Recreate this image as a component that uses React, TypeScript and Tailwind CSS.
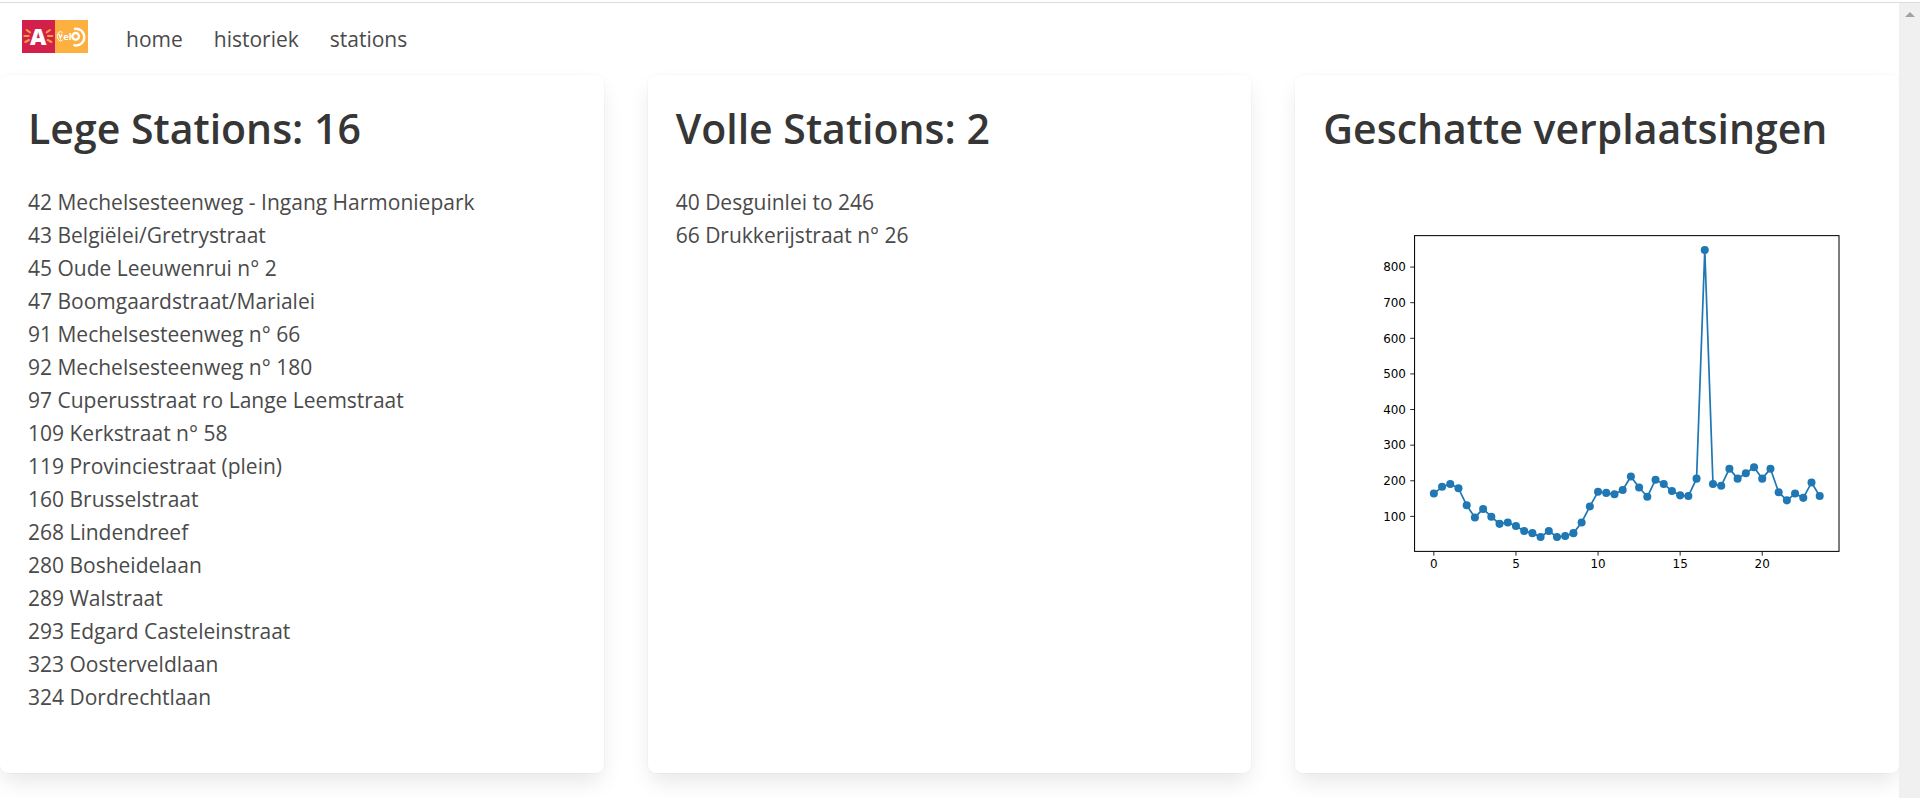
import type { ReactNode } from 'react';

const navItems = ['home', 'historiek', 'stations'];

const emptyStations = [
  '42 Mechelsesteenweg - Ingang Harmoniepark',
  '43 Belgiëlei/Gretrystraat',
  '45 Oude Leeuwenrui n° 2',
  '47 Boomgaardstraat/Marialei',
  '91 Mechelsesteenweg n° 66',
  '92 Mechelsesteenweg n° 180',
  '97 Cuperusstraat ro Lange Leemstraat',
  '109 Kerkstraat n° 58',
  '119 Provinciestraat (plein)',
  '160 Brusselstraat',
  '268 Lindendreef',
  '280 Bosheidelaan',
  '289 Walstraat',
  '293 Edgard Casteleinstraat',
  '323 Oosterveldlaan',
  '324 Dordrechtlaan',
];

const fullStations = ['40 Desguinlei to 246', '66 Drukkerijstraat n° 26'];

// One value per half hour, starting at midnight.
const trips = [
  164, 183, 191, 179, 131, 97, 121, 99, 79, 83, 73, 59, 53, 42, 59, 42, 45, 53, 83, 128, 169, 166, 162, 174,
  212, 181, 155, 203, 191, 171, 159, 157, 206, 848, 191, 186, 234, 206, 221, 238, 206, 234, 168, 145, 164, 152,
  195, 157,
];

const plot = { left: 80, top: 58, width: 496, height: 369 };
const xScale = (hour: number) => plot.left + ((hour + 1.175) / 25.85) * plot.width;
const yScale = (value: number) => plot.top + plot.height - ((value - 1.7) / 886.6) * plot.height;

function Logo() {
  return (
    <svg viewBox="0 0 198 99" className="h-[33px] w-[66px]" role="img" aria-label="Antwerpen Velo">
      <rect width="99" height="99" fill="#d3204a" />
      <rect x="99" width="99" height="99" fill="#fbb040" />
      <g stroke="#f9a13a" strokeWidth="6" strokeLinecap="round">
        <path d="M14 30 L24 37 M7 48 L20 48 M10 66 L21 60" />
        <path d="M84 30 L74 37 M91 48 L78 48 M88 66 L77 60" />
      </g>
      <text
        x="49"
        y="74"
        textAnchor="middle"
        fontSize="68"
        fontWeight="800"
        fontFamily="'Open Sans', sans-serif"
        fill="#fff"
      >
        A
      </text>
      <g fill="none" stroke="#fff">
        <path d="M122 38 A10 14 0 1 0 122 60" strokeWidth="3" />
        <path d="M111 42 L115 55 L120 42" strokeWidth="4" />
        <circle cx="161" cy="49" r="10" strokeWidth="7" />
        <path d="M156 27 A25 25 0 1 1 154 75" strokeWidth="7" />
      </g>
      <text x="124" y="59" fontSize="28" fontWeight="700" fontFamily="'Open Sans', sans-serif" fill="#fff">
        el
      </text>
    </svg>
  );
}

function TripsChart() {
  const points = trips.map((value, i) => ({ x: xScale(i / 2), y: yScale(value) }));
  return (
    <svg
      viewBox="-27 0 640 480"
      className="w-full"
      role="img"
      aria-label="Geschatte verplaatsingen per half uur"
      fontFamily="'DejaVu Sans', sans-serif"
      fontSize="14"
      fill="#000"
    >
      {[0, 5, 10, 15, 20].map((hour) => (
        <g key={hour}>
          <path d={`M${xScale(hour)} 427 v5`} stroke="#000" />
          <text x={xScale(hour)} y="447" textAnchor="middle">
            {hour}
          </text>
        </g>
      ))}
      {[100, 200, 300, 400, 500, 600, 700, 800].map((value) => (
        <g key={value}>
          <path d={`M80 ${yScale(value)} h-5`} stroke="#000" />
          <text x="70" y={yScale(value) + 5} textAnchor="end">
            {value}
          </text>
        </g>
      ))}
      <polyline
        points={points.map((p) => `${p.x},${p.y}`).join(' ')}
        fill="none"
        stroke="#1f77b4"
        strokeWidth="2"
        strokeLinejoin="round"
      />
      {points.map((p, i) => (
        <circle key={i} cx={p.x} cy={p.y} r="4.7" fill="#1f77b4" />
      ))}
      <rect x={plot.left} y={plot.top} width={plot.width} height={plot.height} fill="none" stroke="#000" strokeWidth="1.2" />
    </svg>
  );
}

function Card({ title, children }: { title: string; children: ReactNode }) {
  return (
    <section className="min-w-0 rounded-lg bg-white px-7 pt-7 pb-[59px] shadow-[0_11px_22px_-3px_rgba(10,10,10,0.1),0_0_0_1px_rgba(10,10,10,0.02)]">
      <h1 className="mb-[33px] text-[41px] leading-[50px] font-semibold text-[#363636]">{title}</h1>
      {children}
    </section>
  );
}

function StationList({ stations }: { stations: string[] }) {
  return (
    <ul>
      {stations.map((station) => (
        <li key={station}>{station}</li>
      ))}
    </ul>
  );
}

export default function App() {
  return (
    <div className="flex min-h-screen flex-col overflow-hidden bg-white pt-[2px] font-['Open_Sans','Noto_Sans',sans-serif] text-[21px] leading-[33px] text-[#4a4a4a]">
      <div className="flex flex-1 border-t border-[#dcdcdc]">
        <div className="min-w-0 flex-1 overflow-hidden">
          <nav className="flex h-18 items-center px-[22px]">
            <a href="#" className="mr-[38px] mb-[6px]">
              <Logo />
            </a>
            <div className="flex gap-[31px]">
              {navItems.map((item) => (
                <a key={item} href={`#${item}`}>
                  {item}
                </a>
              ))}
            </div>
          </nav>
          <main className="grid grid-cols-3 gap-11">
            <Card title="Lege Stations: 16">
              <StationList stations={emptyStations} />
            </Card>
            <Card title="Volle Stations: 2">
              <StationList stations={fullStations} />
            </Card>
            <Card title="Geschatte verplaatsingen">
              <TripsChart />
            </Card>
          </main>
        </div>
        <div className="flex w-[21px] justify-center bg-[#f0f0f0] pt-[9px]" aria-hidden="true">
          <svg viewBox="0 0 10 5" className="h-[5px] w-[10px]">
            <path d="M0 5 L5 0 L10 5 Z" fill="#a3a3a3" />
          </svg>
        </div>
      </div>
    </div>
  );
}
